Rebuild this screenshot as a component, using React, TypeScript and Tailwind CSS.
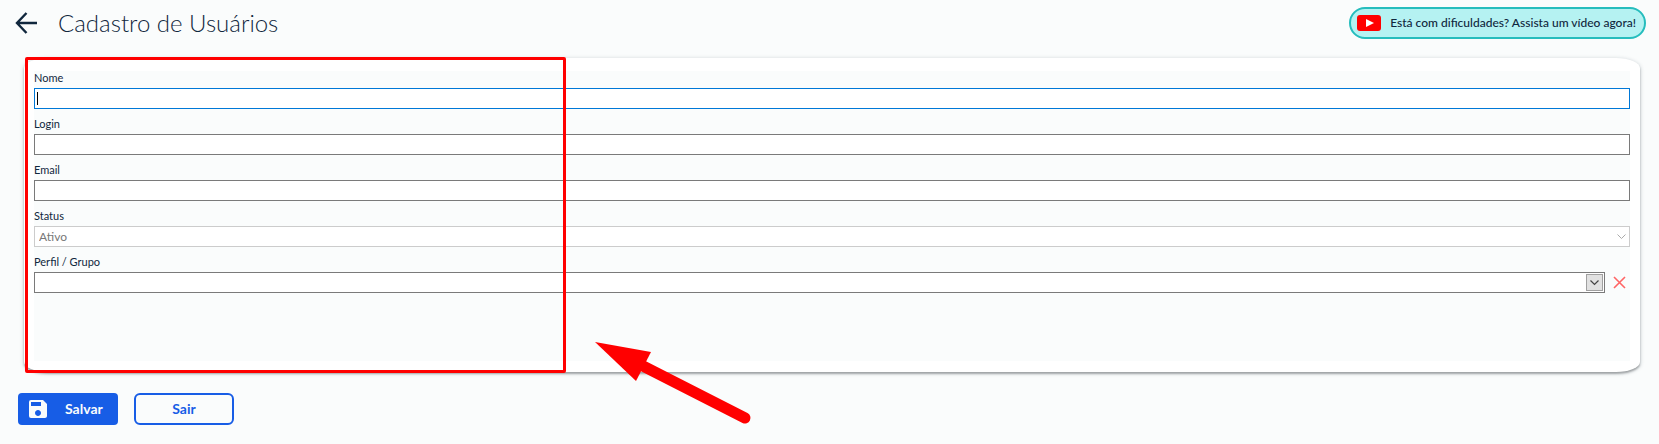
import { useState } from 'react'
import { MdSave } from 'react-icons/md'

const textFields = [
  { id: 'nome', label: 'Nome' },
  { id: 'login', label: 'Login' },
  { id: 'email', label: 'Email' },
]

export default function App() {
  const [values, setValues] = useState<Record<string, string>>({ nome: '', login: '', email: '' })
  const [active, setActive] = useState('nome')
  const [perfil, setPerfil] = useState('')

  return (
    <div className="min-h-screen bg-[#fafcfc] font-['Lato',sans-serif] text-[#10273d]">
      {/* Header */}
      <header className="flex items-start justify-between pt-[7px] pr-[13px] pl-[15px]">
        <div className="flex h-8 items-center gap-5">
          <button type="button" aria-label="Voltar">
            <svg width="23" height="22" viewBox="0 0 23 22" fill="none" stroke="currentColor" strokeWidth="2.4">
              <path d="M11.5 1 L2 11 L11.5 21 M2 11 H22" strokeLinejoin="miter" />
            </svg>
          </button>
          <h1 className="text-2xl font-light">Cadastro de Usuários</h1>
        </div>
        <a
          href="#video"
          className="flex h-8 items-center gap-[9px] rounded-full border-2 border-[#26bdbd] bg-[#b5f2f2] pr-2 pl-[6px] text-xs font-medium whitespace-nowrap"
        >
          <svg width="24" height="16" viewBox="0 0 24 16">
            <rect width="24" height="16" rx="3" fill="#ff0000" />
            <path d="M9 4 L17 8 L9 12 Z" fill="#ffffff" />
          </svg>
          Está com dificuldades? Assista um vídeo agora!
        </a>
      </header>

      {/* Form */}
      <main className="relative mt-[19px] mr-[19px] ml-6 rounded-[24px/10px] bg-white px-[10px] pt-[13px] pb-[11px] shadow-[0_2px_2px_rgba(0,0,0,0.25),0_1px_4px_rgba(16,39,61,0.25)]">
        <form className="flex min-h-[290px] flex-col gap-2 bg-[#fafcfc] text-xs">
          {textFields.map((field) => (
            <div key={field.id} className="flex flex-col">
              <label htmlFor={field.id} className="h-[17px] text-[11px] leading-[14px]">{field.label}</label>
              <div className="relative flex">
                <input
                  id={field.id}
                  type="text"
                  value={values[field.id]}
                  onFocus={() => setActive(field.id)}
                  onChange={(e) => setValues({ ...values, [field.id]: e.target.value })}
                  className={`h-[21px] w-full border bg-white px-1 outline-none ${active === field.id ? 'border-[#0078d7]' : 'border-[#7a7a7a]'}`}
                />
                {active === field.id && !values[field.id] && (
                  <span className="absolute top-1 left-[3px] h-[13px] w-px bg-black" />
                )}
              </div>
            </div>
          ))}

          <div className="flex flex-col">
            <label htmlFor="status" className="h-[17px] text-[11px] leading-[14px]">Status</label>
            <div className="relative flex">
              <select
                id="status"
                disabled
                className="h-[21px] w-full appearance-none border border-[#cccccc] bg-white px-1 text-[#777777] opacity-100"
              >
                <option>Ativo</option>
              </select>
              <svg className="absolute top-2 right-1" width="9" height="6" viewBox="0 0 9 6" fill="none" stroke="#aaaaaa">
                <path d="M0.5 0.5 L4.5 4.5 L8.5 0.5" />
              </svg>
            </div>
          </div>

          <div className="flex flex-col">
            <label htmlFor="perfil" className="h-[17px] text-[11px] leading-[14px]">Perfil / Grupo</label>
            <div className="flex items-center gap-2 pr-1">
              <div className="flex h-[21px] flex-1 items-center border border-[#7a7a7a] bg-white pr-px">
                <input
                  id="perfil"
                  type="text"
                  value={perfil}
                  onChange={(e) => setPerfil(e.target.value)}
                  className="h-full flex-1 px-1 outline-none"
                />
                <button
                  type="button"
                  aria-label="Abrir lista"
                  className="flex h-[17px] w-[17px] items-center justify-center border border-[#a0a0a0] bg-[#e1e1e1]"
                >
                  <svg width="9" height="6" viewBox="0 0 9 6" fill="none" stroke="#444444" strokeWidth="1.2">
                    <path d="M0.5 0.5 L4.5 4.5 L8.5 0.5" />
                  </svg>
                </button>
              </div>
              <button type="button" aria-label="Limpar perfil" onClick={() => setPerfil('')}>
                <svg width="13" height="13" viewBox="0 0 13 13" fill="none" stroke="#ff6464" strokeWidth="1.6">
                  <path d="M1 1 L12 12 M12 1 L1 12" />
                </svg>
              </button>
            </div>
          </div>
        </form>

        {/* Highlight and pointer over the form */}
        <div className="pointer-events-none absolute -top-px left-px h-[316px] w-[541px] rounded-[2px] border-3 border-[#ff0000]" />
        <svg className="pointer-events-none absolute top-[284px] left-[571px]" width="160" height="84" viewBox="0 0 160 84">
          <path d="M0 0 L56 10 L41 39 Z" fill="#ff0000" />
          <path d="M46 23 L150 76" stroke="#ff0000" strokeWidth="11" strokeLinecap="round" />
        </svg>
      </main>

      {/* Actions */}
      <div className="flex gap-4 pt-[21px] pl-[18px] text-sm font-bold">
        <button type="button" className="flex h-8 w-[100px] items-center gap-[15px] rounded bg-[#175de6] pl-2 text-[#fafcfc]">
          <MdSave size={24} />
          Salvar
        </button>
        <button type="button" className="h-8 w-[100px] rounded-md border-2 border-[#175de6] text-[#175de6]">
          Sair
        </button>
      </div>
    </div>
  )
}
